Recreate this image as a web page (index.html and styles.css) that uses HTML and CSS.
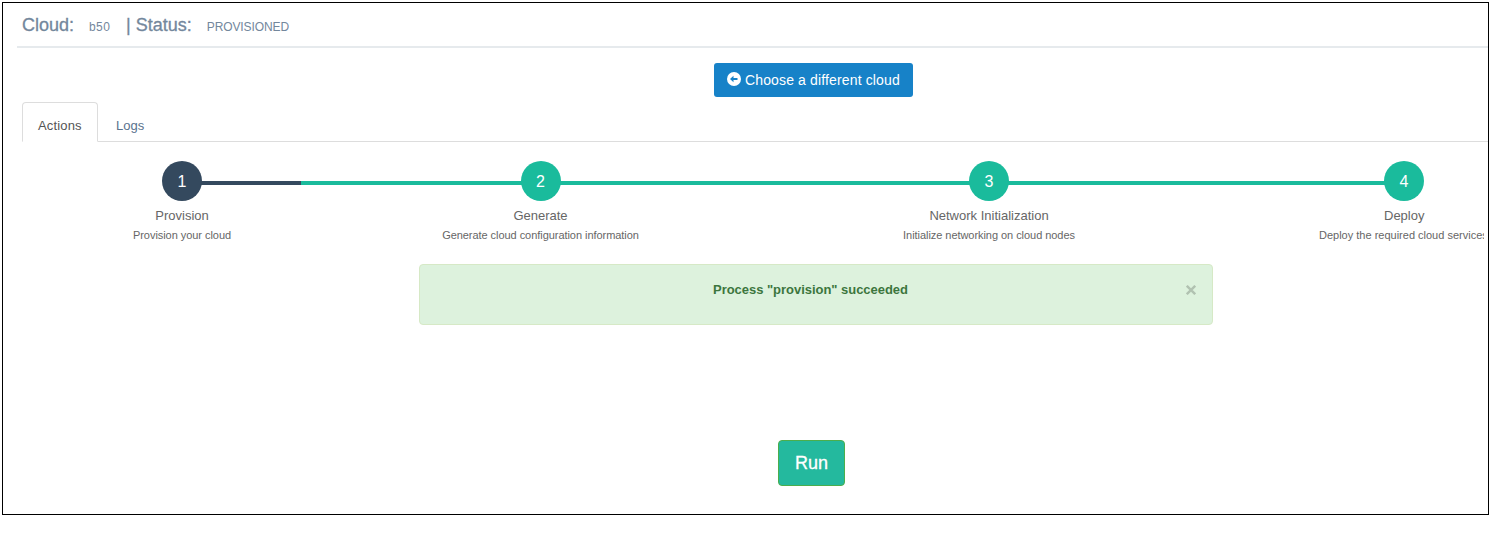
FILE: index.html
```html
<!DOCTYPE html>
<html lang="en">
<head>
<meta charset="utf-8">
<title>Cloud provisioning</title>
<link rel="stylesheet" href="styles.css">
</head>
<body>
<main class="frame">
  <header class="header">
    <span class="term">Cloud:</span><span class="value cloud-name">b50</span><span class="term">| Status:</span><span class="value status">PROVISIONED</span>
  </header>
  <div class="toolbar">
    <button class="choose"><svg class="arrow" viewBox="0 0 14 14"><circle cx="7" cy="7" r="7" fill="#fff"/><path d="M3 7 6.5 3.8V6H10.5V8H6.5V10.2Z" fill="#1782c8"/></svg><span class="choose-text">Choose a different cloud</span></button>
  </div>
  <nav class="tabs"><a class="tab active">Actions</a><a class="tab">Logs</a></nav>
  <section class="steps">
    <div class="step current"><div class="dot">1</div><div class="name">Provision</div><div class="desc">Provision your cloud</div></div>
    <div class="step"><div class="dot">2</div><div class="name">Generate</div><div class="desc">Generate cloud configuration information</div></div>
    <div class="step"><div class="dot">3</div><div class="name">Network Initialization</div><div class="desc">Initialize networking on cloud nodes</div></div>
    <div class="step last"><div class="dot">4</div><div class="name">Deploy</div><div class="desc">Deploy the required cloud services</div></div>
  </section>
  <div class="alert"><strong class="message">Process "provision" succeeded</strong><svg class="close" viewBox="0 0 10 10"><path d="M.8 .8 9.2 9.2M9.2 .8 .8 9.2" stroke="#b1c2b1" stroke-width="2.4"/></svg></div>
  <div class="run-row"><button class="run">Run</button></div>
</main>
</body>
</html>
```

FILE: styles.css
```css
* { box-sizing: border-box; }
body {
  margin: 0;
  padding: 2px 0 0 2px;
  background: #fff;
  font: 13px/18px "Liberation Sans", Arial, sans-serif;
}
button { font-family: inherit; margin: 0; }
.frame {
  width: 1487px;
  height: 513px;
  border: 1px solid #000;
  overflow: hidden;
}
.header {
  display: flex;
  align-items: baseline;
  height: 45px;
  margin-left: 14px;
  padding: 11px 0 0 5px;
  border-bottom: 2px solid #e6eaed;
  color: #73879c;
}
.term {
  font-size: 18px;
  line-height: 22px;
  -webkit-text-stroke: 0.3px #73879c;
  white-space: pre;
}
.value { font-size: 12px; }
.cloud-name { width: 21px; margin: 0 16px 0 15px; letter-spacing: .4px; }
.status { margin-left: 15px; letter-spacing: -.1px; }
.toolbar {
  display: flex;
  height: 54px;
  padding: 15px 0 0 711px;
}
.choose {
  display: flex;
  align-items: center;
  width: 199px;
  height: 34px;
  padding: 0 0 0 13px;
  border: 0;
  border-radius: 3px;
  background: #1782c8;
  color: #fff;
  font-size: 14px;
}
.arrow { width: 14px; height: 14px; margin: -2px 4px 0 0; }
.choose-text { letter-spacing: .14px; white-space: nowrap; }
.tabs {
  display: flex;
  height: 40px;
  margin-left: 19px;
  border-bottom: 1px solid #ddd;
}
.tab {
  height: 40px;
  padding: 15px 18px 0;
  color: #5a738e;
}
.tab.active {
  width: 76px;
  padding: 14px 0 0 15px;
  border: 1px solid #ddd;
  border-bottom-color: #fff;
  border-radius: 4px 4px 0 0;
  background: #fff;
  color: #555;
  letter-spacing: .15px;
}
.steps {
  display: grid;
  grid-template-columns: 238px 479px 418px 286px;
  height: 122px;
  padding: 19px 0 0 60px;
  color: #666;
}
.step {
  display: flex;
  flex-direction: column;
  align-items: center;
  background: linear-gradient(#1abb9c, #1abb9c) 0 20px / 100% 4px no-repeat;
}
.step.current {
  background: linear-gradient(#34495e, #34495e) right 20px / 50% 4px no-repeat;
}
.step.last {
  align-items: flex-start;
  overflow: hidden;
  padding-left: 121px;
  background-size: 206px 4px;
}
.last .dot,
.last .name { margin-left: 65px; }
.dot {
  width: 40px;
  height: 40px;
  border-radius: 50%;
  background: #1abb9c;
  color: #fff;
  font-size: 16px;
  line-height: 41px;
  text-align: center;
}
.current .dot { background: #34495e; }
.name { margin-top: 6px; line-height: 18px; white-space: nowrap; }
.desc {
  margin-top: 3px;
  font-size: 11px;
  line-height: 14px;
  letter-spacing: -.05px;
  white-space: nowrap;
}
.last .desc { letter-spacing: 0; }
.alert {
  display: flex;
  justify-content: space-between;
  width: 794px;
  height: 61px;
  margin-left: 416px;
  padding: 16px 16px 0 293px;
  border: 1px solid #d6e9c6;
  border-radius: 4px;
  background: #ddf2dd;
  color: #3c763d;
}
.message { letter-spacing: -.03px; white-space: nowrap; }
.close { width: 10px; height: 10px; margin-top: 4px; }
.run-row { display: flex; padding: 115px 0 0 775px; }
.run {
  width: 67px;
  height: 46px;
  padding: 0;
  border: 1px solid #4cae4c;
  border-radius: 4px;
  background: #24b99e;
  color: #fff;
  font-size: 18px;
  -webkit-text-stroke: 0.3px #fff;
}
```
